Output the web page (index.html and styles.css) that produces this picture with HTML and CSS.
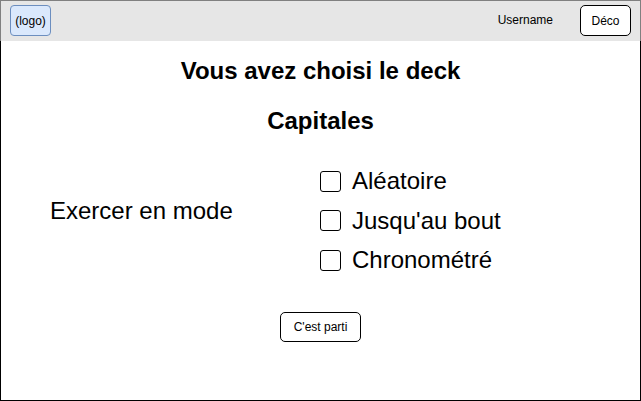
FILE: index.html
```html
<!DOCTYPE html>
<html lang="fr">
<head>
<meta charset="utf-8">
<link rel="stylesheet" href="styles.css">
</head>
<body>
<div class="frame">
  <header class="topbar">
    <div class="logo">(logo)</div>
    <div class="spacer"></div>
    <span class="username">Username</span>
    <button class="btn deco">Déco</button>
  </header>
  <main class="content">
    <h1 class="title">Vous avez choisi le deck</h1>
    <h1 class="title deck">Capitales</h1>
    <section class="modes">
      <div class="mode-label">Exercer en mode</div>
      <div class="options">
        <label class="option"><span class="box"></span>Aléatoire</label>
        <label class="option"><span class="box"></span>Jusqu'au bout</label>
        <label class="option"><span class="box"></span>Chronométré</label>
      </div>
    </section>
    <div class="actions"><button class="btn go">C'est parti</button></div>
  </main>
</div>
</body>
</html>
```

FILE: styles.css
```css
* { box-sizing: border-box; }
html, body { margin: 0; padding: 0; background: #fff; }
body {
  font-family: "Liberation Sans", Arial, Helvetica, sans-serif;
  color: #000;
}
.frame {
  width: 641px;
  height: 401px;
  display: flex;
  flex-direction: column;
}
.topbar {
  height: 41px;
  background: #e6e6e6;
  border: 1px solid #808080;
  border-bottom: none;
  display: flex;
  align-items: flex-start;
  padding: 4px 9px 0 9px;
}
.logo {
  width: 41px;
  height: 31px;
  background: #dae8fc;
  border: 1px solid #6c8ebf;
  border-radius: 4px;
  font-size: 12px;
  display: flex;
  align-items: center;
  justify-content: center;
}
.spacer { flex: 1; }
.username {
  font-size: 12px;
  line-height: 31px;
  margin-right: 27px;
}
.btn {
  font-family: inherit;
  font-size: 12px;
  color: #000;
  background: #fff;
  border: 1px solid #000;
  border-radius: 5px;
  padding: 0;
  display: flex;
  align-items: center;
  justify-content: center;
}
.deco { width: 51px; height: 31px; }
.content {
  flex: 1;
  border: 1px solid #000;
  border-top: none;
  display: flex;
  flex-direction: column;
  align-items: stretch;
  padding-top: 16px;
}
.title {
  margin: 0;
  font-size: 24px;
  line-height: 28px;
  font-weight: bold;
  text-align: center;
}
.deck { margin-top: 22px; }
.modes {
  display: flex;
  margin-top: 32px;
  padding-left: 49px;
}
.mode-label {
  width: 270px;
  font-size: 24px;
  line-height: 28px;
  margin-top: 30px;
}
.options {
  display: flex;
  flex-direction: column;
  gap: 11.5px;
}
.option {
  display: flex;
  align-items: center;
  gap: 11px;
  font-size: 24px;
  line-height: 28px;
  height: 28px;
}
.box {
  width: 21px;
  height: 21px;
  border: 1.25px solid #000;
  border-radius: 3px;
  background: #fff;
}
.actions {
  display: flex;
  justify-content: center;
  margin-top: 38px;
}
.go { width: 81px; height: 30px; border-radius: 5px; }
```
